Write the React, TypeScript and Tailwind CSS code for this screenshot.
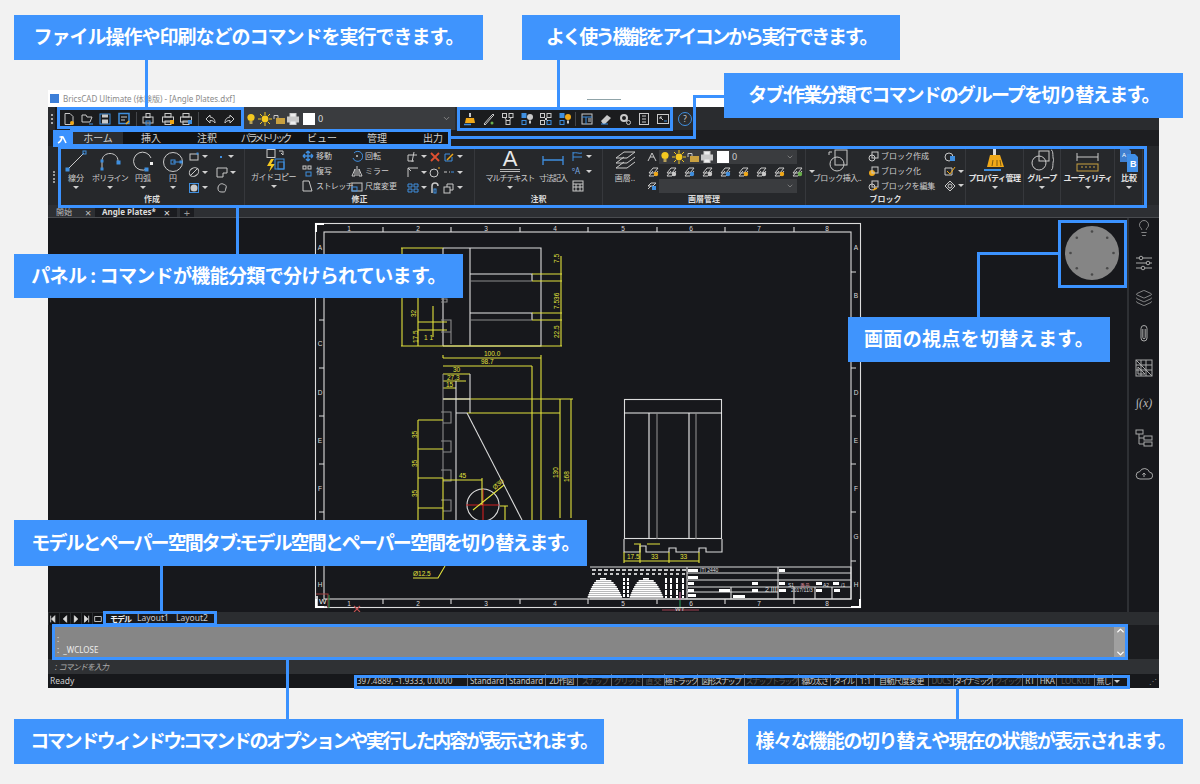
import React from "react";
import { Lightbulb, Layers, ChevronDown, ChevronUp } from "lucide-react";

const G = "#c9c9c9";
const B = "#3f8fe0";
const O = "#f0a818";
const Y = "#f4c820";

function Ic({ s = 14, children }: { s?: number; children?: React.ReactNode }) {
  return (
    <svg width={s} height={s} viewBox={`0 0 ${s} ${s}`} fill="none" stroke={G} strokeWidth={1} className="shrink-0">
      {children}
    </svg>
  );
}
const Caret = () => <span className="w-0 h-0 border-x-[3px] border-x-transparent border-t-[3px] border-t-[#d0d0d0] shrink-0" />;

const Bulb = ({ c = Y }: { c?: string }) => (
  <Ic s={12}><circle cx="6" cy="4.5" r="3.6" fill={c} stroke="none" /><rect x="4.5" y="8" width="3" height="3" fill="#b9a25a" stroke="none" /></Ic>
);
const Sun = () => (
  <Ic s={14}><circle cx="7" cy="7" r="3.4" fill={Y} stroke="none" /><path d="M7 0v3M7 11v3M0 7h3M11 7h3M2 2l2 2M10 10l2 2M12 2l-2 2M4 10l-2 2" stroke={Y} /></Ic>
);
const Lock = () => (
  <Ic s={12}><rect x="3" y="5" width="9" height="6" fill="#c8a040" stroke="none" /><path d="M1 6V2.5h4V5" stroke={G} /></Ic>
);
const Print = ({ a }: { a?: string }) => (
  <Ic s={14}><rect x="1.5" y="5" width="11" height="5" fill={a ? "none" : G} stroke={G} /><rect x="4" y="1.5" width="6" height="3.5" fill={a ? "none" : "#eee"} /><rect x="4" y="9" width="6" height="3.5" fill={a ? "none" : "#eee"} />{a && <rect x="9" y="8" width="4" height="4" fill={a} stroke="none" />}</Ic>
);

function LayerTool() {
  return (
    <div className="flex items-center gap-[1px]">
      <Bulb />
      <Sun />
      <Lock />
      <Print />
      <span className="w-[12px] h-[12px] bg-white ml-[2px] shrink-0" />
    </div>
  );
}

function Big({ w, label, children, nocaret, bold, lc = "" }: { w: string; label: string; children: React.ReactNode; nocaret?: boolean; bold?: boolean; lc?: string }) {
  return (
    <div className={`${w} flex flex-col items-center shrink-0`}>
      <div className="h-[23px] flex items-end justify-center">{children}</div>
      <div className={`h-[12px] flex items-center text-[8px] whitespace-nowrap ${bold ? "font-bold text-[#e4e4e4]" : "text-[#cfcfcf]"} ${lc}`}>{label}</div>
      {!nocaret && <div className="mt-[2px] flex"><Caret /></div>}
    </div>
  );
}

function Panel({ w, label, children }: { w: string; label?: string; children: React.ReactNode }) {
  return (
    <div className={`${w} shrink-0 flex flex-col border-r border-[#36383c]`}>
      <div className="h-[44px] flex">{children}</div>
      <div className="h-[11px] flex items-center justify-center text-[8px] font-bold text-[#dcdcdc]">{label}</div>
    </div>
  );
}

function Row({ text, children, w = "" }: { text?: string; children: React.ReactNode; w?: string }) {
  return (
    <div className={`h-[15.5px] flex items-center gap-[2px] text-[8px] whitespace-nowrap text-[#cfcfcf] ${w}`}>
      {children}
      {text}
    </div>
  );
}

const Rect = ({ x, y, w, h }: { x: number; y: number; w: number; h: number }) => <rect x={x} y={y} width={w} height={h} stroke={B} fill={B} />;

const tabs: [string, string][] = [
  ["ホーム", "w-[50px] bg-[#2b2d30]"],
  ["挿入", "w-[56px]"],
  ["注釈", "w-[56px]"],
  ["パラメトリック", "w-[60px] tracking-[-3px]"],
  ["ビュー", "w-[54px]"],
  ["管理", "w-[56px]"],
  ["出力", "w-[56px]"],
];

const status: [string, string, boolean][] = [
  ["397.4889, -1.9333, 0.0000", "w-[113px] justify-start pl-[2px]", true],
  ["Standard", "w-[39px]", true],
  ["Standard", "w-[39px]", true],
  ["2D作図", "w-[32px] tracking-[-0.5px]", true],
  ["スナップ", "w-[34px] tracking-[-1.5px]", false],
  ["グリッド", "w-[31px] tracking-[-1.5px]", false],
  ["直交", "w-[22px]", false],
  ["極トラック", "w-[33px] tracking-[-1.5px]", true],
  ["図形スナップ", "w-[47px] tracking-[-1.5px]", true],
  ["スナップトラック", "w-[54px] tracking-[-1.5px]", false],
  ["線の太さ", "w-[32px] tracking-[-1.5px]", true],
  ["タイル", "w-[26px] tracking-[-1px]", true],
  ["1:1", "w-[18px]", true],
  ["自動尺度変更", "w-[54px] tracking-[-0.5px]", true],
  ["DUCS", "w-[25px] tracking-[-0.5px]", false],
  ["ダイナミック", "w-[39px] tracking-[-1.7px]", true],
  ["クイック", "w-[30px] tracking-[-1.5px]", false],
  ["RT", "w-[15px]", true],
  ["HKA", "w-[19px] tracking-[-0.5px]", true],
  ["LOCKUI", "w-[38px]", false],
  ["無し", "w-[18px] tracking-[-1px]", true],
];

function Hump({ cx, top, left, right }: { cx: number; top: number; left: number; right: number }) {
  const rows = [];
  for (let y = top; y < 598; y += 2) {
    const t = (y - top) / (598 - top);
    const f = Math.sqrt(t);
    rows.push(<rect key={y} x={cx - left * f - 3} y={y} width={(left + right) * f + 6} height="1.7" fill="#fff" />);
  }
  return <>{rows}</>;
}

function Drawing() {
  const Y2 = "#e2e23c";
  const W = "#dcdcdc";
  const W2 = "#8c8c8c";
  const nums = [349, 418, 486, 555, 623, 691, 759, 827];
  const ticksX = [383, 451, 520, 588, 657, 725, 794];
  const letters = ["A", "B", "C", "D", "E", "F", "G", "H"];
  const ticksY = [272, 320, 368, 416, 464, 512, 561];
  const notch = [412, 441, 470, 500];
  const dimT = { fill: Y2, fontSize: 6.5, stroke: "none", fontFamily: "Liberation Sans" } as const;
  return (
    <svg width="1079" height="394" viewBox="48 218 1079 394" fill="none" strokeWidth="1.1" className="block">
      <rect x="315.5" y="223.5" width="545" height="384" stroke={W} />
      <rect x="324" y="232" width="527" height="367" stroke={W} />
      <path d="M316 232V224H324" stroke="#fff" strokeWidth="2" />
      <path d="M851 607H860V599" stroke="#fff" strokeWidth="2" />
      <path d="M316 599V607H324" stroke="#fff" strokeWidth="2" />
      {nums.map((x, i) => (
        <g key={x}>
          <text x={x} y="231" fill={W} fontSize="6.5" textAnchor="middle" fontFamily="Liberation Sans">{i + 1}</text>
          <text x={x} y="606" fill={W} fontSize="6.5" textAnchor="middle" fontFamily="Liberation Sans">{i + 1}</text>
        </g>
      ))}
      {ticksX.map((x) => <path key={x} d={`M${x} 227V232M${x} 599V604`} stroke={W} />)}
      {letters.map((l, i) => (
        <g key={l}>
          {i !== 1 && i !== 6 && <text x="320" y={250 + i * 48.2} fill={W} fontSize="6.5" textAnchor="middle" fontFamily="Liberation Sans">{l}</text>}
          <text x="856" y={250 + i * 48.2} fill={W} fontSize="6.5" textAnchor="middle" fontFamily="Liberation Sans">{l}</text>
        </g>
      ))}
      {ticksY.map((y) => <path key={y} d={`M319 ${y}H324M851 ${y}H856`} stroke={W} />)}

      {/* top view */}
      <path d="M443 248H541V346H443M470 248V346M443 248V346" stroke={W} />
      <path d="M470 274H532V281M470 313H532V320" stroke="#e8e8e8" />
      <path d="M470 281H532M470 320H532" stroke={W2} />
      <path d="M441 299h6v3h-6M441 320h10v12h-8M441 332h10v12" stroke={W2} />
      <path d="M401 248H443M401 346H562M532 274H562M532 281H562M532 313H562M532 320H562M561 256V346M402 248V346M418 298V346M433 306V337M418 322H447M418 330H447" stroke={Y2} />
      <text transform="translate(559 263) rotate(-90)" {...dimT}>7.5</text>
      <text transform="translate(559 309) rotate(-90)" {...dimT}>7.536</text>
      <text transform="translate(559 338) rotate(-90)" {...dimT}>22.5</text>
      <text transform="translate(416 317) rotate(-90)" {...dimT}>32</text>
      <text transform="translate(418 343) rotate(-90)" {...dimT}>17.5</text>
      <text x="424" y="340" {...dimT}>1 1</text>

      {/* middle view */}
      <path d="M443 358H541M443 366H532M443 374H470M443 381H466M443 388H456M443 399H573M467 413H560M560 399V518M571 399V518M532 366V520M541 358V520" stroke={Y2} />
      <path d="M443 355V358M541 355V358" stroke={Y2} />
      <text x="484" y="356" {...dimT}>100.0</text>
      <text x="481" y="364" {...dimT}>98.7</text>
      <text x="453" y="372" {...dimT}>30</text>
      <text x="447" y="380" {...dimT}>27.3</text>
      <text x="446" y="387" {...dimT}>15</text>
      <path d="M443 374V478" stroke={W2} />
      <path d="M456 381V520M470 374V413M456 413H467" stroke={W} />
      <path d="M443 399H470" stroke={W} />
      {notch.map((y) => <path key={y} d={`M441 ${y}h10v11h-8`} stroke={W2} />)}
      <path d="M467 413L522 520" stroke={W} />
      <circle cx="483" cy="505" r="16" stroke={W} />
      <path d="M466 505H499M483 489V521" stroke="#d02020" />
      <path d="M418 420V520M418 420H443M418 449H443M418 478H443M418 508H443M443 480H482M482 478V505M443 478V520M473 510L504 485M505 506V520M500 506H508" stroke={Y2} />
      <text transform="translate(417 438) rotate(-90)" {...dimT}>35</text>
      <text transform="translate(417 467) rotate(-90)" {...dimT}>35</text>
      <text transform="translate(417 497) rotate(-90)" {...dimT}>35</text>
      <text transform="translate(558 478) rotate(-90)" {...dimT}>130</text>
      <text transform="translate(569 482) rotate(-90)" {...dimT}>168</text>
      <text x="459" y="478" {...dimT}>45</text>
      <text transform="translate(495 490) rotate(-42)" {...dimT}>Ø30</text>
      <text x="413" y="576" {...dimT}>Ø12.5</text>
      <path d="M413 578H438L445 566" stroke={Y2} />

      {/* side view */}
      <rect x="624.5" y="399.5" width="97" height="139" stroke={W} />
      <path d="M624 413H722M649 413V539M689 413V539" stroke="#f0f0f0" />
      <path d="M657 413V539M696 413V539" stroke={W2} />
      <path d="M624 539V552H640V546H646V552H669V548H676V552H699V548H706V552H722V539" stroke={W} />
      <path d="M624 552V563M640 544V563M669 552V563M699 552V563M624 561H699M634 544H641M647 544H660" stroke={Y2} />
      <text x="627" y="559" {...dimT}>17.5</text>
      <text x="651" y="559" {...dimT}>33</text>
      <text x="680" y="559" {...dimT}>33</text>

      {/* title block */}
      <path d="M590 567H851V599H590" stroke={W} />
      <path d="M687 567V599M687 573H851M687 580H851M687 587H851M687 592H778M778 567V599M778 587H851M731 587V599M794 587V599M815 587V599M832 587V599" stroke={W} />
      <path d="M592 570H686" stroke="#fff" strokeDasharray="4 2" strokeWidth="1.3" />
      <path d="M592 574H686" stroke="#fff" strokeDasharray="3 3" strokeWidth="1.3" />
      <Hump cx={603} top={578} left={13} right={17} />
      <Hump cx={646} top={578} left={14} right={15} />
      <path d="M624 578V598M628 578V598" stroke="#fff" strokeWidth="2" strokeDasharray="3 1" />
      <path d="M666 578V598M671 578V598M677 578V598M683 578V598" stroke="#fff" strokeWidth="2" strokeDasharray="5 1" />
      <rect x="688" y="569" width="10" height="3" fill="#fff" />
      <rect x="688" y="576" width="10" height="3" fill="#fff" />
      <rect x="688" y="582" width="6" height="3" fill="#fff" />
      <rect x="688" y="589" width="6" height="3" fill="#fff" />
      <rect x="719" y="589" width="11" height="3" fill="#fff" />
      <rect x="752" y="582" width="6" height="3" fill="#fff" />
      <rect x="752" y="589" width="6" height="3" fill="#fff" />
      <rect x="779" y="569" width="6" height="3" fill="#fff" />
      <rect x="779" y="582" width="6" height="3" fill="#fff" />
      <rect x="779" y="589" width="7" height="3" fill="#fff" />
      <rect x="816" y="582" width="6" height="3" fill="#fff" />
      <rect x="833" y="582" width="6" height="3" fill="#fff" />
      <rect x="816" y="589" width="6" height="3" fill="#fff" />
      <rect x="834" y="589" width="6" height="3" fill="#fff" />
      <rect x="688" y="594" width="8" height="3" fill="#fff" />
      <rect x="733" y="595" width="12" height="3" fill="#fff" />
      <text x="700" y="572" fontSize="5" fill={W} fontFamily="Liberation Sans">ITI 2440</text>
      <text x="765" y="592" fontSize="7" fill={W} fontFamily="Liberation Sans">2 III</text>
      <text x="788" y="587" fontSize="5" fill={W} fontFamily="Liberation Sans">S1</text>
      <text x="800" y="587" fontSize="5" fill="#d08090" fontFamily="Liberation Sans">番号</text>
      <text x="823" y="587" fontSize="5" fill={W} fontFamily="Liberation Sans">A2</text>
      <text x="841" y="587" fontSize="5" fill={W} fontFamily="Liberation Sans">/1</text>
      <text x="791" y="592" fontSize="5" fill={W} fontFamily="Liberation Sans">2017/11/3</text>

      {/* ucs */}
      <path d="M316 594H328V608" stroke="#a04040" />
      <path d="M329 595V608" stroke="#2a8a4a" />
      <path d="M317 596V607H327" stroke="#fff" strokeWidth="1.5" />
      <text x="319" y="604" fontSize="8" fill="#eee" fontFamily="Liberation Sans">W</text>
      <path d="M354 606L360 612M360 606L354 612" stroke="#c05050" />
      <path d="M680 592V600" stroke="#d070a0" />
      <path d="M680 600V607" stroke="#2a9a5a" />
      <path d="M662 610H699" stroke="#a04050" />
      <text x="675" y="611" fontSize="6" fill={W} fontFamily="Liberation Sans">WY</text>

      {/* view cube */}
      <circle cx="1092" cy="253" r="27" fill="#858585" />
      {[0, 45, 90, 135, 180, 225, 270, 315].map((a) => (
        <circle key={a} cx={1092 + 21.5 * Math.cos((a * Math.PI) / 180)} cy={253 + 21.5 * Math.sin((a * Math.PI) / 180)} r="1.3" fill="#4a4a4a" />
      ))}
    </svg>
  );
}

const SIde = "#a8a8a8";

export default function App() {
  const SB = "w-[18px] h-[18px] text-[#a8a8a8]";
  return (
    <div className="relative w-[1200px] h-[784px] overflow-hidden bg-[#f2f2f2] pt-[90px] pl-[48px] font-['Noto_Sans','Noto_Sans_CJK_JP',sans-serif]">
      {/* application window */}
      <div className="w-[1111px] h-[598px] flex flex-col bg-[#1b1c1f] text-[#cfcfcf]">
        {/* title bar */}
        <div className="h-[17px] shrink-0 bg-white flex items-center gap-[4px] pl-[2px] text-[8px] text-[#8a8a8a] leading-none">
          <span className="w-[9px] h-[9px] bg-[#3d7fd8] shrink-0" />
          <span className="whitespace-nowrap">BricsCAD Ultimate (体験版) - [Angle Plates.dxf]</span>
          <span className="ml-[348px] mt-[1px] w-[34px] h-[1px] bg-[#8fa3a8]" />
        </div>

        {/* quick access */}
        <div className="h-[23px] shrink-0 bg-[#2a2c2f] flex items-stretch">
          <div className="w-[7px] flex items-center justify-center"><span className="w-[2px] h-[10px] border-l-2 border-dotted border-[#aaa]" /></div>
          <div className="w-[189px] bg-[#1b1c1e] flex items-center">
            <div className="ml-[7px] flex"><Ic><path d="M3 1.5h5l3 3v8H3z" /><circle cx="10" cy="11" r="2" fill={O} stroke="none" /></Ic></div>
            <div className="ml-[4px] flex"><Ic><path d="M2 3h4l1 2h5l-2 5H2z" /><path d="M9 12h4" stroke={B} /></Ic></div>
            <div className="ml-[4px] flex"><Ic><rect x="2" y="2" width="10" height="10" stroke={B} /><rect x="4" y="2.5" width="6" height="3" fill={G} stroke="none" /><rect x="4" y="7.5" width="6" height="4" fill={G} stroke="none" /></Ic></div>
            <div className="ml-[5px] flex"><Ic><rect x="2" y="1.5" width="10" height="10" stroke={B} strokeWidth="1.5" /><path d="M4 5h6M4 8h4" /><path d="M9 12l3-3" stroke={O} strokeWidth="1.5" /></Ic></div>
            <span className="ml-[5px] w-[1px] h-[14px] bg-[#44464a]" />
            <div className="ml-[4px] flex"><Ic><rect x="2" y="5" width="10" height="6" /><rect x="5" y="1.5" width="4" height="4" /><rect x="5" y="9" width="4" height="4" stroke={B} /></Ic></div>
            <div className="ml-[6px] flex"><Print a={O} /></div>
            <div className="ml-[4px] flex"><Print a={B} /></div>
            <span className="ml-[5px] w-[1px] h-[14px] bg-[#44464a]" />
            <div className="ml-[5px] flex"><Ic><path d="M6 3L2 7l4 4V8.5c3 0 4 1 5 2.5 0-4-2-5.5-5-6z" /></Ic></div>
            <div className="ml-[4px] flex"><Ic><path d="M8 3l4 4-4 4V8.5c-3 0-4 1-5 2.5 0-4 2-5.5 5-6z" /></Ic></div>
          </div>
          <div className="w-[211px] bg-[#3a3c3f] flex items-center pl-[1px] pr-[4px] text-[9px] text-[#ddd]">
            <LayerTool />
            <span className="ml-[3px]">0</span>
            <ChevronDown className="ml-auto w-[9px] h-[9px] text-[#999]" />
          </div>
          <div className="w-[2px]" />
          <div className="w-[216px] h-[23px] bg-[#1b1c1e] flex items-center pl-[3px]">
            <div className="w-[19px] flex justify-center"><Ic><path d="M6 1h2v4H6z" fill={G} stroke="none" /><path d="M3 6h8l1 5H2z" fill={O} stroke="none" /><path d="M1 12.5h7" stroke={B} strokeWidth="1.5" /></Ic></div>
            <div className="w-[19px] flex justify-center"><Ic><path d="M2 12L9 4l2-2 1 1-2 2-7 8z" /><circle cx="10" cy="11" r="1.5" fill="#6ab04c" stroke="none" /></Ic></div>
            <div className="w-[19px] flex justify-center"><Ic><rect x="1.5" y="1.5" width="4" height="4" /><rect x="8" y="1.5" width="4" height="4" /><rect x="5" y="8.5" width="4" height="4" /><path d="M4 6l2 3M10 6L8 9" /></Ic></div>
            <div className="w-[19px] flex justify-center"><Ic><rect x="2" y="1.5" width="4" height="4" stroke={B} fill={B} /><rect x="2" y="8.5" width="4" height="4" stroke={B} /><circle cx="10" cy="5" r="3" fill={G} stroke="none" /><rect x="9" y="8.5" width="2" height="3" fill={G} stroke="none" /></Ic></div>
            <div className="w-[19px] flex justify-center"><Ic><rect x="1.5" y="1.5" width="4" height="4" /><rect x="8" y="1.5" width="4" height="4" /><rect x="1.5" y="8.5" width="4" height="4" /><rect x="8" y="8.5" width="4" height="4" stroke={B} /><path d="M5 5l4 4M9 5L5 9" /></Ic></div>
            <div className="w-[19px] flex justify-center"><Ic><rect x="2" y="1.5" width="4" height="4" stroke={B} fill={B} /><rect x="2" y="8.5" width="4" height="4" stroke={B} /><circle cx="10" cy="5" r="3" fill={O} stroke="none" /><rect x="9" y="8.5" width="2" height="3" fill={G} stroke="none" /></Ic></div>
            <span className="mx-[1px] w-[1px] h-[14px] bg-[#44464a]" />
            <div className="w-[19px] flex justify-center"><Ic><rect x="2" y="2" width="10" height="10" /><path d="M2 5h10M6 5v7" stroke={B} /><path d="M8 7h3M8 9h3" /></Ic></div>
            <div className="w-[19px] flex justify-center"><Ic><path d="M2 9l6-6 4 3-6 6H4z" fill={G} stroke="none" /><path d="M2 12h7" stroke={B} /></Ic></div>
            <div className="w-[19px] flex justify-center"><Ic><circle cx="6" cy="6" r="3" strokeWidth="2" /><circle cx="10.5" cy="10.5" r="2" /></Ic></div>
            <div className="w-[19px] flex justify-center"><Ic><rect x="2.5" y="1.5" width="9" height="11" /><path d="M5 4h4M5 7h4M5 10h4" /></Ic></div>
            <div className="w-[19px] flex justify-center"><Ic><rect x="1.5" y="2.5" width="11" height="9" /><path d="M4 5l3 3M4 5v2M4 5h2" /><path d="M8 9h3" stroke={B} /></Ic></div>
          </div>
          <div className="ml-[4px] w-[16px] flex items-center justify-center">
            <span className="w-[14px] h-[14px] rounded-full border border-[#3f8fe0] text-[8px] leading-none flex items-center justify-center text-[#ccc]">?</span>
          </div>
        </div>

        {/* ribbon tabs */}
        <div className="h-[16px] shrink-0 bg-[#1d1e21] flex">
          <div className="w-[6px]" />
          <div className="w-[16px] h-[15px] mt-[1px] bg-[#3b92ff] flex items-center justify-center">
            <svg width="10" height="10" viewBox="0 0 10 10" fill="none" stroke="#fff" strokeWidth="1.6"><path d="M1 9C3 8 5 5 5 2M2.5 3H6l3 6" /></svg>
          </div>
          <div className="w-[3px]" />
          <div className="w-[378px] bg-[#111214] flex items-center text-[10px] leading-none text-[#cfcfcf]">
            {tabs.map(([t, c]) => (
              <div key={t} className={`${c} h-full flex items-center justify-center whitespace-nowrap shrink-0`}>{t}</div>
            ))}
          </div>
        </div>

        {/* ribbon */}
        <div className="h-[59px] shrink-0 bg-[#26282b] flex pt-[3px]">
          <div className="w-[12px] shrink-0 flex items-center justify-center"><span className="w-[2px] h-[12px] border-l-2 border-dotted border-[#999]" /></div>

          <Panel w="w-[185px]" label="作成">
            <Big w="w-[32px]" label="線分"><Ic s={22}><path d="M3 19L19 3" stroke={G} /><Rect x={1} y={18} w={3} h={3} /><rect x={18} y={1} width={3} height={3} stroke={B} /></Ic></Big>
            <Big w="w-[36px]" label="ポリライン" lc="tracking-[-0.8px]"><Ic s={22}><path d="M3 20V11C3 1 19 1 19 11" /><Rect x={2} y={10} w={2} h={2} /><Rect x={2} y={18} w={2} h={2} /><Rect x={18} y={11} w={3} h={3} /></Ic></Big>
            <Big w="w-[30px]" label="円弧"><Ic s={22}><path d="M15 19A9 9 0 1 1 19 8" /><Rect x={13} y={18} w={3} h={3} /><rect x={18} y={12} width={3} height={3} fill="#eee" stroke="none" /></Ic></Big>
            <Big w="w-[30px]" label="円"><Ic s={22}><circle cx="11" cy="12" r="9.5" /><path d="M11 12H18" stroke={B} /><rect x={9} y={10} width={4} height={4} stroke={B} /><Rect x={18} y={11} w={2} h={2} /></Ic></Big>
            <div className="grid grid-cols-2 w-[57px] content-start">
              <Row><Ic s={12}><rect x="2" y="3" width="8" height="6" /><Rect x={9} y={2} w={1} h={1} /></Ic><Caret /></Row>
              <Row><span className="w-[2px] h-[2px] bg-[#3f8fe0] mx-[4px]" /><Caret /></Row>
              <Row><Ic s={12}><ellipse cx="6" cy="6" rx="5" ry="4" transform="rotate(-35 6 6)" /><path d="M3 9L9 3" /></Ic><Caret /></Row>
              <Row><Ic s={12}><path d="M1 2h10v5H7v4H1z" /></Ic><Caret /></Row>
              <Row><Ic s={12}><rect x="1.5" y="1.5" width="9" height="9" stroke={B} /><circle cx="6" cy="6" r="3.5" fill={G} stroke="none" /></Ic><Caret /></Row>
              <Row><Ic s={12}><path d="M2 6c0-3 3-5 5-4s4 1 3 4 0 4-3 4-5 0-5-4z" /></Ic></Row>
            </div>
          </Panel>

          <Panel w="w-[230px]" label="修正">
            <div className="w-[57px] shrink-0 flex flex-col items-center">
              <Ic s={23}><rect x="5" y="0.5" width="8" height="8" /><path d="M17 2h4v4M21 6l-2-2" /><path d="M9 10L5 17h4l-2 6 6-8H9l3-5z" fill={Y} stroke="none" /><rect x="13" y="10" width="9" height="10" stroke={B} /><rect x="16" y="13" width="6" height="7" stroke={B} /></Ic>
              <div className="h-[10px] flex items-center text-[8px] tracking-[-0.5px] whitespace-nowrap">ガイドコピー</div>
              <div className="mt-[3px] flex"><Caret /></div>
            </div>
            <div className="w-[49px] shrink-0 flex flex-col">
              <Row text="移動"><Ic s={12}><path d="M6 1v10M1 6h10M6 1L4 3M6 1l2 2M6 11L4 9M6 11l2-2M1 6l2-2M1 6l2 2M11 6L9 4M11 6L9 8" stroke={B} strokeWidth="1.4" /></Ic></Row>
              <Row text="複写"><Ic s={12}><rect x="1" y="1" width="3" height="3" /><rect x="6" y="1" width="3" height="3" /><rect x="4" y="7" width="5" height="4" stroke={B} /></Ic></Row>
              <Row text="ストレッチ" w="tracking-[-0.6px]"><Ic s={12}><path d="M1 1h6l3 10H1z" /></Ic></Row>
            </div>
            <div className="w-[56px] shrink-0 flex flex-col">
              <Row text="回転"><Ic s={12}><path d="M3 3A5 5 0 1 1 2 8" stroke={B} /><circle cx="6" cy="6" r="1" fill={G} stroke="none" /></Ic></Row>
              <Row text="ミラー"><Ic s={12}><path d="M6 1v10M4 4v7H1zM8 4v7h3z" /></Ic></Row>
              <Row text="尺度変更"><Ic s={12}><rect x="1" y="3" width="10" height="8" /><rect x="1" y="7" width="5" height="4" stroke={B} /></Ic></Row>
            </div>
            <div className="grid grid-cols-[22px_14px_24px] w-[64px] content-start">
              <Row><Ic s={12}><path d="M1 4h9M1 4v6h6M7 1L5 11" /></Ic><Caret /></Row>
              <Row><svg width="12" height="12" viewBox="0 0 12 12" stroke="#e05030" strokeWidth="1.8"><path d="M2 2l8 8M10 2L2 10" /></svg></Row>
              <Row><Ic s={12}><path d="M2 3h5M2 3v7h7V6" stroke={B} /><path d="M4 9l6-6" stroke={O} strokeWidth="1.5" /></Ic><Caret /></Row>
              <Row><Ic s={12}><path d="M1 11V2h10M1 2l3 3" /></Ic><Caret /></Row>
              <Row><Ic s={12}><circle cx="5" cy="7" r="4" /><path d="M10 1v2" stroke={O} /></Ic></Row>
              <Row><Ic s={12}><path d="M1 6h3M6 6h1" /><path d="M8 6h3" stroke={B} /></Ic><Caret /></Row>
              <Row><Ic s={12}><path d="M1 2h4v3H1zM7 2h4v3H7zM1 7h4v3H1zM7 7h4v3H7z" stroke={B} /></Ic><Caret /></Row>
              <Row><Ic s={12}><path d="M3 11V4a3 3 0 0 1 6 0" stroke={G} strokeWidth="1.5" /><rect x="5" y="7" width="2" height="4" stroke={B} /></Ic></Row>
              <Row><Ic s={12}><rect x="1" y="5" width="6" height="6" /><path d="M4 5V2h6v6H7" /></Ic><Caret /></Row>
            </div>
          </Panel>

          <Panel w="w-[128px]" label="注釈">
            <div className="w-[70px] shrink-0 flex flex-col items-center">
              <div className="h-[23px] text-[22px] leading-[19px] font-['Liberation_Sans',sans-serif] text-[#e8e8e8] border-b-[3px] border-double border-[#bbb] px-[3px]">A</div>
              <div className="h-[12px] flex items-center text-[8px] tracking-[-1px] whitespace-nowrap">マルチテキスト</div>
              <div className="mt-[2px] flex"><Caret /></div>
            </div>
            <Big w="w-[16px]" label="寸法記入" nocaret lc="tracking-[-1px]"><Ic s={22}><path d="M1 6v9M21 6v9M1 10h20" stroke={B} strokeWidth="1.3" /></Ic></Big>
            <div className="flex flex-col w-[42px] pl-[11px]">
              <Row><Ic s={12}><path d="M1 2v9M1 3c4-1 6 1 9 0M1 7h9" stroke={B} /></Ic><Caret /></Row>
              <Row><span className="w-[12px] text-[8px] text-[#7aa8e0]">ºA</span><Caret /></Row>
              <Row><Ic s={12}><rect x="1" y="1" width="10" height="10" /><path d="M1 4h10M1 7h10M4 4v7M8 4v7" /></Ic></Row>
            </div>
          </Panel>

          <Panel w="w-[203px]" label="画層管理">
            <Big w="w-[44px]" label="画層.." nocaret><Ic s={22}><path d="M2 8l8-6h11l-8 6zM2 13l8-6M21 7l-8 6H2M2 18l8-6M21 12l-8 6H2" /></Ic></Big>
            <div className="flex flex-col w-[150px] shrink-0">
              <div className="h-[15px] flex items-center">
                <span className="w-[11px] shrink-0"><Ic s={10}><path d="M1 9l4-8 4 8M3 5h4" /></Ic></span>
                <div className="ml-[1px] flex-1 h-[14px] bg-[#3a3c3f] flex items-center pr-[3px] text-[9px]"><LayerTool /><span className="ml-[3px]">0</span><ChevronDown className="ml-auto w-[8px] h-[8px] text-[#999]" /></div>
              </div>
              <div className="h-[15px] flex items-center gap-[5px]">
                {[O, G, B, G, B, O, G, O, "#6ab04c"].map((c, i) => (
                  <Ic key={i} s={13}><path d="M2 8l4-5h5L7 8zM2 11l4-5M11 6L7 11H2" /><circle cx="9" cy="9" r="2.2" fill={c} stroke="none" /></Ic>
                ))}
                <Caret />
              </div>
              <div className="h-[14px] flex items-center">
                <span className="w-[11px] shrink-0"><Ic s={10}><path d="M1 5l3-3h5L6 5zM1 8l3-3" /><rect x="5" y="5" width="4" height="4" fill={B} stroke="none" /></Ic></span>
                <div className="ml-[1px] flex-1 h-[14px] bg-[#3a3c3f] flex items-center justify-end pr-[3px]"><ChevronDown className="w-[8px] h-[8px] text-[#999]" /></div>
              </div>
            </div>
          </Panel>

          <Panel w="w-[160px]" label="ブロック">
            <Big w="w-[62px]" label="ブロック挿入.." nocaret lc="tracking-[-0.5px]"><Ic s={23}><path d="M6 3H3V6" /><rect x="9" y="1" width="12" height="15" /><circle cx="11" cy="15" r="7" /></Ic></Big>
            <div className="w-[66px] shrink-0 flex flex-col">
              <Row text="ブロック作成"><Ic s={11}><circle cx="4" cy="7" r="3" /><rect x="4" y="1" width="6" height="6" /></Ic></Row>
              <Row text="ブロック化"><Ic s={11}><circle cx="4" cy="7" r="3" fill={O} stroke="none" /><rect x="4" y="1" width="6" height="6" /></Ic></Row>
              <Row text="ブロックを編集" w="tracking-[-0.3px]"><Ic s={11}><circle cx="4" cy="7" r="3" /><rect x="4" y="1" width="6" height="6" /><path d="M5 10l4-2" stroke={O} strokeWidth="1.5" /></Ic></Row>
            </div>
            <div className="w-[32px] flex flex-col pl-[10px]">
              <Row><Ic s={12}><circle cx="5" cy="7" r="4" /><rect x="6" y="6" width="5" height="5" fill={B} stroke="none" /></Ic></Row>
              <Row><Ic s={12}><path d="M1 3h7v7H1z" /><path d="M3 6l3 3 5-7" stroke={O} /></Ic><Caret /></Row>
              <Row><Ic s={12}><path d="M6 1l5 5-5 5-5-5z" /><circle cx="6" cy="6" r="2" /></Ic><Caret /></Row>
            </div>
          </Panel>

          <Panel w="w-[58px]">
            <Big w="w-[57px]" label="プロパティ管理" bold lc="tracking-[-0.5px]">
              <Ic s={23}><rect x="10" y="0" width="3" height="6" fill="#ddd" stroke="none" /><path d="M7 6h10l4 12H4z" fill={O} stroke="none" /><path d="M10 11l-1 6M14 11v6M17 11l1 6" stroke="#7a5a10" /><path d="M1 21h17" stroke={B} strokeWidth="2" /></Ic>
            </Big>
          </Panel>
          <Panel w="w-[37px]">
            <Big w="w-[36px]" label="グループ" bold lc="tracking-[-0.5px]">
              <Ic s={23}><rect x="8" y="2" width="10" height="10" /><circle cx="8" cy="14" r="7" /><path d="M20 1c3 0 1 9 3 10-2 1 0 10-3 10" /></Ic>
            </Big>
          </Panel>
          <Panel w="w-[54px]">
            <Big w="w-[53px]" label="ユーティリティ" bold lc="tracking-[-1px]">
              <Ic s={23}><path d="M1 4v8M22 4v8M1 8h21" /><rect x="1" y="15" width="21" height="7" stroke="#c8a040" /><path d="M5 18h14" stroke="#c8a040" strokeDasharray="2 2" /></Ic>
            </Big>
          </Panel>
          <Panel w="w-[28px]">
            <Big w="w-[28px]" label="比較" bold>
              <svg width="20" height="24" viewBox="0 0 20 24"><path d="M1 0h8l3 3v11H1z" fill="#3f7fd0" /><path d="M8 6h8l3 3v15H8z" fill="#3f8fe8" /><text x="11" y="19" fontSize="9" fontWeight="700" fill="#fff" fontFamily="Liberation Sans">B</text><text x="3" y="9" fontSize="6" fill="#fff" fontFamily="Liberation Sans">A</text></svg>
            </Big>
          </Panel>
        </div>

        {/* document tabs */}
        <div className="h-[13px] shrink-0 bg-[#2d2f33] flex items-end text-[8px] leading-none border-b border-[#4a4c50]">
          <div className="w-[47px] h-[10px] flex items-center pl-[8px] gap-[13px] text-[#bbb]"><span>開始</span><span className="text-[11px]">×</span></div>
          <div className="w-[82px] h-[10px] bg-[#1b1c20] flex items-center pl-[7px] gap-[8px] font-bold text-[#ddd]"><span className="whitespace-nowrap">Angle Plates*</span><span className="text-[11px] font-normal">×</span></div>
          <div className="ml-[3px] w-[14px] h-[10px] bg-[#1b1c20] flex items-center justify-center text-[11px] text-[#999]">+</div>
        </div>

        {/* canvas and side bar */}
        <div className="h-[394px] shrink-0 flex bg-[#17181c]">
          <div className="w-[1079px] shrink-0"><Drawing /></div>
          <div className="w-[32px] border-l-2 border-[#2e3034] flex flex-col items-center gap-[17px] pt-[1px]">
            <Lightbulb className={SB} strokeWidth={1} />
            <svg width="18" height="18" viewBox="0 0 18 18" fill="none" stroke={SIde}><path d="M1 4h16M1 9h16M1 14h16" /><circle cx="6" cy="4" r="1.8" fill="#17181c" /><circle cx="13" cy="9" r="1.8" fill="#17181c" /><circle cx="8" cy="14" r="1.8" fill="#17181c" /></svg>
            <Layers className={SB} strokeWidth={1} />
            <svg width="18" height="18" viewBox="0 0 18 18" fill="none" stroke={SIde}><path d="M6 4.5a3 3 0 0 1 6 0v9.5a3 3 0 0 1-6 0z" /><path d="M7.8 5v8.5a1.2 1.2 0 0 0 2.4 0V5" /></svg>
            <svg width="18" height="18" viewBox="0 0 18 18" fill="none" stroke={SIde} strokeWidth="1"><rect x="1" y="1" width="16" height="16" /><path d="M1 6h16M1 11h16M6 1v16M11 1v16M1 1l16 16M3 15V8l7 7z" /></svg>
            <span className="h-[18px] text-[12px] leading-[18px] italic font-['Liberation_Serif',serif] text-[#b8b8b8] whitespace-nowrap">∫(x)</span>
            <svg width="18" height="18" viewBox="0 0 18 18" fill="none" stroke={SIde} strokeWidth="1"><rect x="1" y="1" width="7" height="4" /><rect x="9" y="7" width="8" height="4" /><rect x="9" y="13" width="8" height="4" /><path d="M4 5v10h5M4 9h5" /></svg>
            <svg width="18" height="18" viewBox="0 0 18 18" fill="none" stroke={SIde}><path d="M5 15h9a3.4 3.4 0 0 0 .5-6.8A5.2 5.2 0 0 0 4.8 7.6 3.7 3.7 0 0 0 5 15z" /><path d="M9 13V9M7.3 10.7 9 9l1.7 1.7" /></svg>
          </div>
        </div>

        {/* layout tabs */}
        <div className="h-[13px] shrink-0 bg-[#2b2d30] flex items-center text-[8.5px] leading-none">
          <div className="w-[55px] flex gap-[1px] pl-[1px]">
            {["M7 2v8L3 6zM2 2v8", "M8 2v8L4 6z", "M4 2v8l4-4z", "M3 2v8l4-4zM8 2v8", "M2 3h8v6H2z"].map((d, i) => (
              <span key={i} className="w-[10px] h-[12px] bg-[#111214] flex items-center justify-center">
                <svg width="10" height="12" viewBox="0 0 12 12" fill={i === 4 ? "none" : "#ddd"} stroke="#ddd"><path d={d} /></svg>
              </span>
            ))}
          </div>
          <div className="w-[114px] h-full bg-[#18191c] flex items-center pl-[7px] text-[#ccc]">
            <span className="font-bold text-[8px] tracking-[-1px] text-[#eee] w-[27px] whitespace-nowrap">モデル</span>
            <span className="w-[39px]">Layout1</span>
            <span>Layout2</span>
          </div>
        </div>

        {/* command history */}
        <div className="h-[34px] shrink-0 flex bg-[#1b1c1f]">
          <div className="w-[4px]" />
          <div className="flex-1 bg-[#868686] flex flex-col justify-end pl-[5px] pb-[4px] text-[8px] leading-[11px] text-[#eee]">
            <span>:</span>
            <span>:&nbsp;&nbsp;_WCLOSE</span>
          </div>
          <div className="w-[13px] bg-[#a0a0a0] flex flex-col items-center justify-between text-white">
            <ChevronUp className="w-[11px] h-[11px]" strokeWidth={3} />
            <ChevronDown className="w-[11px] h-[11px]" strokeWidth={3} />
          </div>
          <div className="w-[32px]" />
        </div>

        {/* command input */}
        <div className="h-[15px] shrink-0 bg-[#2f3134] flex items-center pl-[7px] text-[8px] tracking-[-0.9px] italic text-[#aaa]">:&nbsp;&nbsp;コマンドを入力</div>

        {/* status bar */}
        <div className="flex-1 bg-[#17181b] flex items-center text-[8.5px] leading-none">
          <span className="w-[307px] pl-[2px] text-[#ccc]">Ready</span>
          <div className="w-[772px] h-full flex items-center text-[8px] overflow-hidden">
            {status.map(([t, w, on], i) => (
              <span key={i} className={`${w} h-full shrink-0 flex items-center justify-center whitespace-nowrap border-r border-[#6a6a6a] ${on ? "text-[#c8c8c8]" : "text-[#555]"}`}>{t}</span>
            ))}
            <span className="w-[8px] h-full flex items-center justify-center"><Caret /></span>
          </div>
          <span className="ml-auto mr-[2px] text-[8px] text-[#888]">⋰</span>
        </div>
      </div>

      {/* highlight frames */}
      <div className="absolute left-[57px] top-[107px] w-[187px] h-[22px] border-[3px] border-[#3b92ff]" />
      <div className="absolute left-[457px] top-[107px] w-[216px] h-[24px] border-[3px] border-[#3b92ff]" />
      <div className="absolute left-[70px] top-[129px] w-[381px] h-[18px] border-[3px] border-[#3b92ff]" />
      <div className="absolute left-[53px] top-[130px] w-[17px] h-[17px] border-[3px] border-[#3b92ff]" />
      <div className="absolute left-[58px] top-[146px] w-[1089px] h-[62px] border-[3px] border-[#3b92ff]" />
      <div className="absolute left-[1058px] top-[220px] w-[69px] h-[68px] border-[3px] border-[#3b92ff]" />
      <div className="absolute left-[103px] top-[611px] w-[114px] h-[15px] border-[3px] border-[#3b92ff]" />
      <div className="absolute left-[52px] top-[624px] w-[1076px] h-[36px] border-[3px] border-[#3b92ff]" />
      <div className="absolute left-[354px] top-[675px] w-[776px] h-[14px] border-[3px] border-[#3b92ff]" />

      {/* leader lines */}
      <div className="absolute left-[145px] top-[60px] w-[3px] h-[47px] bg-[#3b92ff]" />
      <div className="absolute left-[557px] top-[60px] w-[3px] h-[47px] bg-[#3b92ff]" />
      <div className="absolute left-[693px] top-[95px] w-[3px] h-[44px] bg-[#3b92ff]" />
      <div className="absolute left-[693px] top-[95px] w-[31px] h-[3px] bg-[#3b92ff]" />
      <div className="absolute left-[450px] top-[136px] w-[246px] h-[3px] bg-[#3b92ff]" />
      <div className="absolute left-[236px] top-[208px] w-[3px] h-[46px] bg-[#3b92ff]" />
      <div className="absolute left-[977px] top-[252px] w-[81px] h-[3px] bg-[#3b92ff]" />
      <div className="absolute left-[977px] top-[252px] w-[3px] h-[65px] bg-[#3b92ff]" />
      <div className="absolute left-[160px] top-[566px] w-[3px] h-[45px] bg-[#3b92ff]" />
      <div className="absolute left-[286px] top-[660px] w-[3px] h-[59px] bg-[#3b92ff]" />
      <div className="absolute left-[956px] top-[689px] w-[3px] h-[30px] bg-[#3b92ff]" />

      {/* callouts */}
      <div className="absolute left-[14px] top-[15px] w-[469px] h-[45px] flex items-center justify-center bg-[#3f94fd] text-white font-bold text-[19px] tracking-[-1px] leading-none whitespace-nowrap">ファイル操作や印刷などのコマンドを実行できます。</div>
      <div className="absolute left-[522px] top-[15px] w-[378px] h-[45px] flex items-center justify-center bg-[#3f94fd] text-white font-bold text-[19px] tracking-[-2.35px] leading-none whitespace-nowrap">よく使う機能をアイコンから実行できます。</div>
      <div className="absolute left-[724px] top-[73px] w-[459px] h-[45px] flex items-center justify-center bg-[#3f94fd] text-white font-bold text-[19px] tracking-[-1.92px] leading-none whitespace-nowrap">タブ:作業分類でコマンドのグループを切り替えます。</div>
      <div className="absolute left-[14px] top-[254px] w-[449px] h-[44px] flex items-center justify-center bg-[#3f94fd] text-white font-bold text-[19px] tracking-[-0.65px] leading-none whitespace-nowrap">パネル : コマンドが機能分類で分けられています。</div>
      <div className="absolute left-[848px] top-[317px] w-[262px] h-[45px] flex items-center justify-center bg-[#3f94fd] text-white font-bold text-[19px] tracking-[0.33px] leading-none whitespace-nowrap">画面の視点を切替えます。</div>
      <div className="absolute left-[14px] top-[520px] w-[573px] h-[46px] flex items-center justify-center pl-[9px] bg-[#3f94fd] text-white font-bold text-[19px] tracking-[-1.93px] leading-none whitespace-nowrap">モデルとペーパー空間タブ:モデル空間とペーパー空間を切り替えます。</div>
      <div className="absolute left-[14px] top-[719px] w-[590px] h-[45px] flex items-center justify-center pl-[9px] bg-[#3f94fd] text-white font-bold text-[19px] tracking-[-2.37px] leading-none whitespace-nowrap">コマンドウィンドウ:コマンドのオプションや実行した内容が表示されます。</div>
      <div className="absolute left-[748px] top-[719px] w-[435px] h-[45px] flex items-center justify-center bg-[#3f94fd] text-white font-bold text-[19px] tracking-[-1.43px] leading-none whitespace-nowrap">様々な機能の切り替えや現在の状態が表示されます。</div>
    </div>
  );
}
